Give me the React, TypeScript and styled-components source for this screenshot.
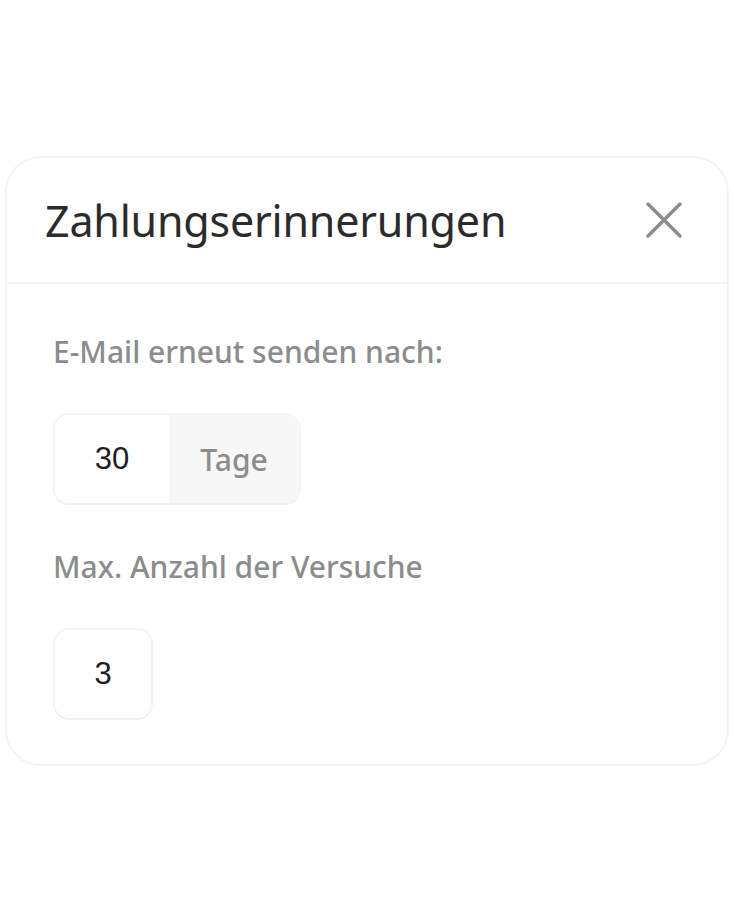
import styled, { createGlobalStyle } from "styled-components";

const GlobalStyle = createGlobalStyle`
  html, body {
    margin: 0;
    padding: 0;
    background: #ffffff;
  }
  body {
    font-family: "Noto Sans", "Open Sans", sans-serif;
  }
`;

const Page = styled.div`
  width: 734px;
  height: 921px;
  padding-top: 156px;
  padding-left: 5px;
  box-sizing: border-box;
`;

const Card = styled.div`
  width: 724px;
  height: 610px;
  box-sizing: border-box;
  border: 2px solid #f3f3f3;
  border-radius: 36px;
  background: #fff;
  overflow: hidden;
`;

const Header = styled.div`
  height: 126px;
  box-sizing: border-box;
  display: flex;
  align-items: center;
  justify-content: space-between;
  padding: 0 44px 0 38px;
  border-bottom: 2px solid #f3f3f3;
`;

const Title = styled.h2`
  margin: 0;
  font-size: 43px;
  font-weight: 400;
  color: #2b2b2b;
  letter-spacing: -0.2px;
`;

const CloseButton = styled.button`
  border: none;
  background: none;
  padding: 0;
  width: 38px;
  height: 38px;
  display: flex;
  align-items: center;
  justify-content: center;
  cursor: pointer;
`;

const Body = styled.div`
  padding: 48px 46px 0 46px;
  display: flex;
  flex-direction: column;
`;

const Label = styled.div`
  font-size: 30px;
  line-height: 40px;
  font-weight: 500;
  color: #8c8c8c;
  margin-bottom: 41px;
`;

const Field = styled.div<{ $last?: boolean }>`
  display: inline-flex;
  align-self: flex-start;
  height: 92px;
  box-sizing: border-box;
  border: 2px solid #f5f5f5;
  border-bottom-color: #efefef;
  border-radius: 16px;
  overflow: hidden;
  margin-bottom: ${({ $last }) => ($last ? "0" : "42px")};
`;

const Value = styled.div<{ $w: number }>`
  width: ${({ $w }) => $w}px;
  display: flex;
  align-items: center;
  justify-content: center;
  font-family: "Liberation Sans", Arial, sans-serif;
  font-size: 31px;
  font-weight: 500;
  color: #1e1e1e;
`;

const Unit = styled.div`
  width: 130px;
  display: flex;
  align-items: center;
  justify-content: center;
  background: #f7f7f7;
  font-size: 30px;
  font-weight: 500;
  color: #8c8c8c;
`;

const XIcon = () => (
  <svg width="38" height="38" viewBox="0 0 38 38" fill="none">
    <path
      d="M3 3 L35 35 M35 3 L3 35"
      stroke="#8c8c8c"
      strokeWidth="3.5"
      strokeLinecap="round"
    />
  </svg>
);

export default function App() {
  return (
    <Page>
      <GlobalStyle />
      <Card>
        <Header>
          <Title>Zahlungserinnerungen</Title>
          <CloseButton aria-label="Schließen">
            <XIcon />
          </CloseButton>
        </Header>
        <Body>
          <Label>E-Mail erneut senden nach:</Label>
          <Field>
            <Value $w={114}>30</Value>
            <Unit>Tage</Unit>
          </Field>
          <Label>Max. Anzahl der Versuche</Label>
          <Field $last>
            <Value $w={96}>3</Value>
          </Field>
        </Body>
      </Card>
    </Page>
  );
}
